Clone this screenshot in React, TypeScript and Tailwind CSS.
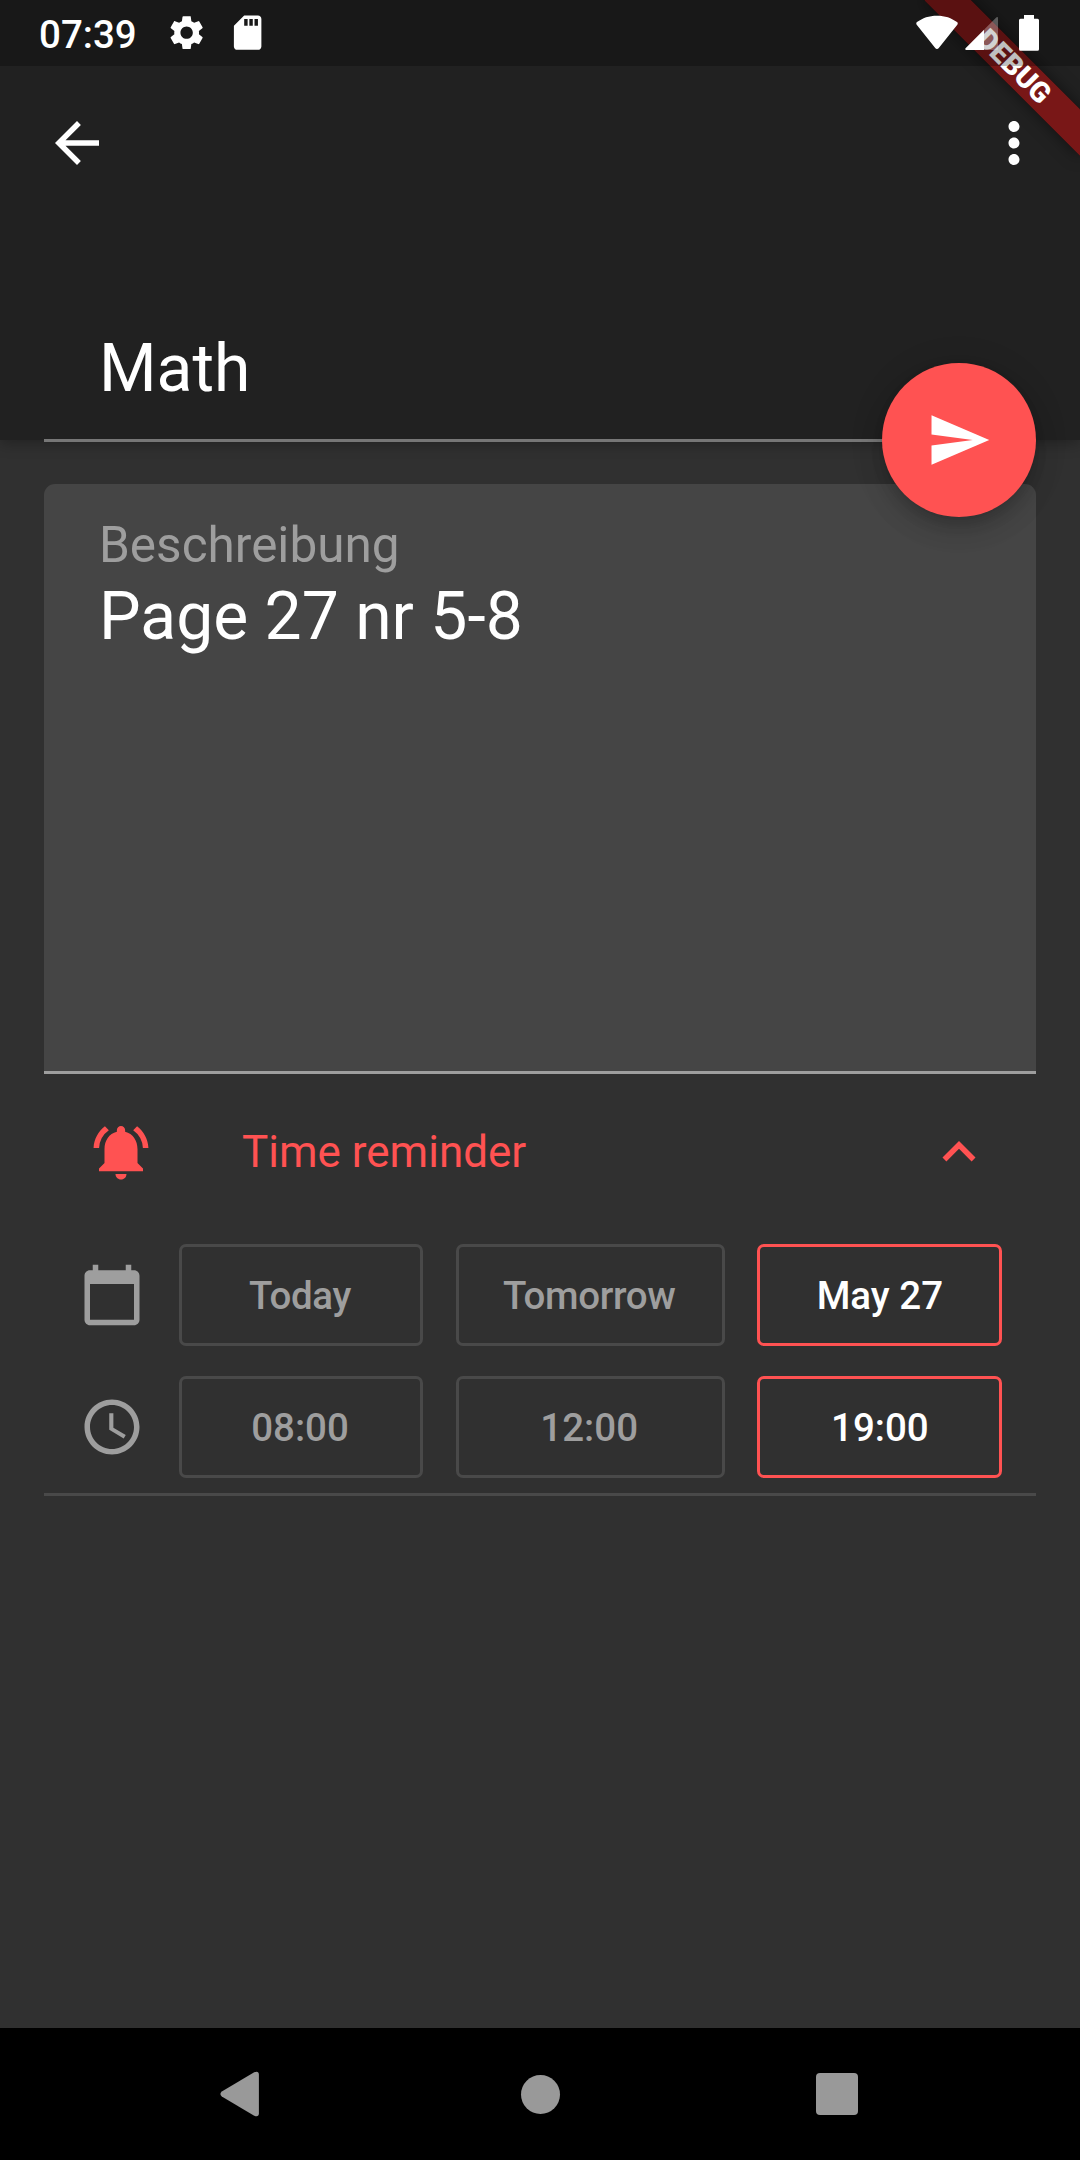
import type { ReactNode } from 'react';
import {
  MdAccessTime,
  MdArrowBack,
  MdCalendarToday,
  MdExpandLess,
  MdMoreVert,
  MdNotificationsActive,
  MdSdCard,
  MdSend,
  MdSettings,
} from 'react-icons/md';

function StatusBar() {
  return (
    <div className="relative z-20 flex h-[66px] items-center bg-black/25 pr-[41px] pl-[39px] text-white">
      <span className="w-[98px] pt-[4px] text-[38.5px] leading-none font-medium">07:39</span>
      <MdSettings className="ml-[29px] size-[41.25px]" />
      <MdSdCard className="ml-[19.500px] size-[41.25px]" />
      <div className="ml-auto flex items-center">
        <svg width="42" height="36" viewBox="0 0 42 36" className="fill-white">
          <path d="M21 34 C20.300 34 19.600 33.600 19.200 33 L0.700 9.800 C0 8.800 0.200 7.800 1 7.100 C6.500 2.900 13 0.700 21 0.700 C29 0.700 35.500 2.900 41 7.100 C41.900 7.800 42 8.800 41.300 9.800 L22.800 33 C22.300 33.600 21.700 34 21 34Z" />
        </svg>
        <svg width="34" height="36" viewBox="0 0 34 36" className="ml-[7px] fill-white">
          <path
            fillOpacity="0.3"
            d="M19 14.700 L31 2.700 C32 1.700 33 2 33 3.500 V33.500 C33 34.700 32.500 35 31.500 35 H19Z"
          />
          <path d="M19 14.700 V35 H1.800 C0.200 35 -0.200 33.900 0.800 32.900Z" />
        </svg>
        <svg width="20" height="36" viewBox="0 0 20 36" className="ml-[20px] fill-white">
          <path d="M5 0 H15 V3.700 H18.500 Q20 3.700 20 5.200 V34.300 Q20 35.800 18.500 35.800 H1.500 Q0 35.800 0 34.300 V5.200 Q0 3.700 1.500 3.700 H5Z" />
        </svg>
      </div>
    </div>
  );
}

function DebugBanner() {
  return (
    <div className="pointer-events-none absolute top-0 right-0 z-10 size-[220px] overflow-hidden">
      <div className="absolute top-[49.600px] left-[43.900px] h-[33px] w-[220px] rotate-45 bg-black/50 shadow-[0_0_16px_rgba(0,0,0,0.5)]">
        <div className="flex h-full items-center justify-center bg-[#b71c1c]/63 pt-px text-[28.500px] leading-none font-black text-white">
          DEBUG
        </div>
      </div>
    </div>
  );
}

function Choice({ label, selected = false }: { label: string; selected?: boolean }) {
  return (
    <button
      className={
        selected
          ? 'h-[102px] rounded-[7px] border-[3px] border-[#ff5252] pt-[2px] text-[38.5px] font-medium tracking-normal text-white'
          : 'h-[102px] rounded-[7px] border-[3px] border-[#494949] pt-[2px] pr-[2px] text-[38.5px] font-medium text-[#9e9e9e]'
      }
    >
      {label}
    </button>
  );
}

function ChoiceRow({
  icon,
  options,
  className = 'tracking-normal',
}: {
  icon: ReactNode;
  options: string[];
  className?: string;
}) {
  return (
    <div className="flex items-center text-[#9e9e9e]">
      {icon}
      <div className={`ml-[34px] grid grid-cols-[244px_269px_245px] gap-x-[32.700px] ${className}`}>
        {options.map((option, i) => (
          <Choice key={option} label={option} selected={i === 2} />
        ))}
      </div>
    </div>
  );
}

export default function App() {
  return (
    <div className="relative flex h-[2160px] w-[1080px] flex-col overflow-hidden bg-[#303030] font-['Roboto',sans-serif]">
      <header className="relative h-[440px] bg-[#212121] shadow-[0_3px_14px_rgba(0,0,0,0.3)]">
        <StatusBar />
        <DebugBanner />
        <div className="mt-[44px] flex justify-between pr-[33px] pl-[44px] text-white">
          <MdArrowBack className="size-[66px]" />
          <MdMoreVert className="size-[66px]" />
        </div>
        <div className="mt-[154px] ml-[44px] h-[112px] w-[992px] border-b-[3px] border-[#777777] pl-[55px] text-[66px] leading-[78px] text-white">
          Math
        </div>
        <button className="absolute top-[363px] right-[44px] flex size-[154px] items-center justify-center rounded-full bg-[#ff5252] text-white shadow-[0_8px_14px_-3px_rgba(0,0,0,0.15),0_14px_26px_rgba(0,0,0,0.12),0_3px_36px_rgba(0,0,0,0.1)]">
          <MdSend className="size-[66px]" />
        </button>
      </header>

      <main className="flex flex-1 flex-col px-[44px] pt-[44px]">
        <div className="h-[590px] rounded-t-[11px] border-b-[3px] border-[#9e9e9e] bg-[#454545] pt-[32px] pl-[55px]">
          <div className="text-[49.5px] leading-[58px] text-[#9e9e9e]">Beschreibung</div>
          <div className="mt-[4px] text-[66px] leading-[78px] text-white">Page 27 nr 5-8</div>
        </div>
        <div className="mt-[45px] flex h-[66px] items-center pr-[44px] pl-[44px] text-[#ff5252]">
          <MdNotificationsActive className="size-[66px]" />
          <span className="ml-[88px] text-[44px] leading-none">Time reminder</span>
          <MdExpandLess className="ml-auto size-[66px]" />
        </div>
        <div className="mt-[59px] flex flex-col gap-[30px] border-b-[3px] border-[#494949] pb-[15px] pl-[35px]">
          <ChoiceRow
            icon={<MdCalendarToday className="size-[66px]" />}
            options={['Today', 'Tomorrow', 'May 27']}
            className="tracking-[-0.35px]"
          />
          <ChoiceRow icon={<MdAccessTime className="size-[66px]" />} options={['08:00', '12:00', '19:00']} />
        </div>
      </main>

      <nav className="flex h-[132px] items-center bg-black fill-[#999999]">
        <svg width="39" height="46" viewBox="0 0 39 46" className="ml-[220px]">
          <path d="M1.800 20.500 L34.200 1.300 Q38.700 -0.500 38.900 3.500 V42.500 Q38.700 46.500 34.200 44.700 L1.800 25.500 Q-1 23 1.800 20.500Z" />
        </svg>
        <div className="ml-[262px] size-[39px] rounded-full bg-[#999999]" />
        <div className="ml-[256px] size-[42px] rounded-[4px] bg-[#999999]" />
      </nav>
    </div>
  );
}
